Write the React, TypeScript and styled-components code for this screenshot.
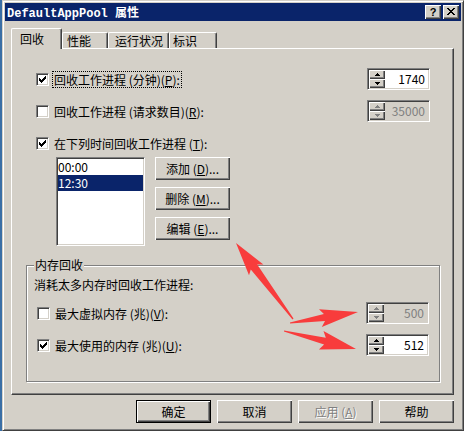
import React from 'react';
import styled, { createGlobalStyle, css } from 'styled-components';

const FACE = '#D4D0C8';
const SHADOW = '#808080';
const DARK = '#404040';
const NAVY = '#0A246A';

const Global = createGlobalStyle`
  html, body { margin: 0; padding: 0; background: #3A6EA5; }
  body {
    font-family: "Noto Sans CJK SC", "Liberation Sans", sans-serif;
    font-size: 12px;
    color: #000;
  }
  * { box-sizing: border-box; }
`;

const raised = css`
  background: ${FACE};
  box-shadow: inset 1px 1px 0 #fff, inset -1px -1px 0 ${DARK}, inset -2px -2px 0 ${SHADOW};
`;

const sunken = css`
  border: 1px solid;
  border-color: ${SHADOW} #fff #fff ${SHADOW};
  box-shadow: inset 1px 1px 0 ${DARK}, inset -1px -1px 0 ${FACE};
`;

const Screen = styled.div`
  position: relative;
  width: 464px;
  height: 431px;
  padding-left: 2px;
  background: #3A6EA5;
  overflow: hidden;
`;

const Window = styled.div`
  width: 462px;
  height: 431px;
  display: flex;
  flex-direction: column;
  background: ${FACE};
  border: 1px solid;
  border-color: ${FACE} ${DARK} ${DARK} ${FACE};
  box-shadow: inset 1px 1px 0 #fff, inset -1px -1px 0 ${SHADOW};
  padding: 2px;
`;

const TitleBar = styled.div`
  height: 18px;
  flex: none;
  display: flex;
  align-items: center;
  padding: 0 2px 0 2px;
  background: ${NAVY};
  color: #fff;
`;

const TitleText = styled.div`
  flex: 1;
  font: bold 12px "Liberation Mono", monospace;
  white-space: pre;
  line-height: 14px;
  padding-top: 1px;
`;

const TitleCjk = styled.span`
  font-family: "Noto Sans CJK SC", sans-serif;
  font-weight: bold;
`;

const CaptionButtons = styled.div`
  display: flex;
  gap: 2px;
`;

const CaptionButton = styled.div`
  ${raised};
  width: 16px;
  height: 14px;
  display: flex;
  align-items: center;
  justify-content: center;
  color: #000;
  font: bold 11px "Liberation Sans", sans-serif;
  line-height: 12px;
  padding-bottom: 1px;
`;

const Client = styled.div`
  flex: 1;
  display: flex;
  flex-direction: column;
  padding: 7px 7px 5px 6px;
`;

const TabStrip = styled.div`
  height: 20px;
  flex: none;
  display: flex;
  align-items: flex-end;
  position: relative;
  z-index: 1;
`;

const Tab = styled.div<{ $active?: boolean; $w: number; $pl: number }>`
  width: ${p => p.$w}px;
  height: ${p => (p.$active ? 21 : 16)}px;
  margin-bottom: ${p => (p.$active ? -1 : 0)}px;
  padding-left: ${p => p.$pl}px;
  display: flex;
  align-items: center;
  background: ${FACE};
  border-top: 1px solid #fff;
  border-left: 1px solid #fff;
  border-right: 1px solid ${DARK};
  box-shadow: inset -1px 0 0 ${SHADOW};
  border-radius: 2px 2px 0 0;
  line-height: 14px;
  white-space: nowrap;
`;

const Panel = styled.div`
  height: 347px;
  flex: none;
  display: flex;
  flex-direction: column;
  border: 1px solid;
  border-color: #fff ${DARK} ${DARK} #fff;
  box-shadow: inset -1px -1px 0 ${SHADOW};
  padding: 19px 13px 0 14px;
`;

const Row = styled.div<{ $mt?: number }>`
  height: 22px;
  flex: none;
  display: flex;
  align-items: center;
  justify-content: space-between;
  padding: 0 10px;
  margin-top: ${p => p.$mt ?? 0}px;
`;

const CheckLabel = styled.label`
  display: flex;
  align-items: center;
  line-height: 14px;
  white-space: nowrap;
`;

const CheckBoxBox = styled.span`
  ${sunken};
  width: 13px;
  height: 13px;
  flex: none;
  background: #fff;
  display: flex;
  align-items: center;
  justify-content: center;
  margin-right: 5px;
`;

const LabelText = styled.span<{ $focus?: boolean }>`
  padding: 1px 1px 0;
  margin-left: -1px;
  outline: ${p => (p.$focus ? '1px dotted #000' : 'none')};
  outline-offset: 0;
`;

const Spinner = styled.div<{ $disabled?: boolean }>`
  ${sunken};
  width: 63px;
  height: 22px;
  display: flex;
  padding: 1px;
  background: ${p => (p.$disabled ? FACE : '#fff')};
`;

const SpinButtons = styled.div`
  width: 16px;
  display: flex;
  flex-direction: column;
`;

const SpinButton = styled.div`
  ${raised};
  flex: 1;
  display: flex;
  align-items: center;
  justify-content: center;
`;

const SpinValue = styled.div<{ $disabled?: boolean }>`
  flex: 1;
  text-align: right;
  padding-right: 3px;
  line-height: 18px;
  color: ${p => (p.$disabled ? SHADOW : '#000')};
`;

const ListArea = styled.div`
  display: flex;
  gap: 10px;
  margin-top: 3px;
  padding-left: 30px;
`;

const ListBox = styled.div`
  ${sunken};
  width: 89px;
  height: 89px;
  padding: 1px;
  background: #fff;
`;

const ListItem = styled.div<{ $selected?: boolean }>`
  height: 16px;
  line-height: 16px;
  background: ${p => (p.$selected ? NAVY : 'transparent')};
  color: ${p => (p.$selected ? '#fff' : '#000')};
`;

const ButtonColumn = styled.div`
  display: flex;
  flex-direction: column;
  gap: 7px;
`;

const PushButton = styled.div<{ $default?: boolean; $disabled?: boolean }>`
  ${raised};
  width: 75px;
  height: 23px;
  display: flex;
  align-items: center;
  justify-content: center;
  line-height: 14px;
  white-space: nowrap;
  color: ${p => (p.$disabled ? SHADOW : '#000')};
  text-shadow: ${p => (p.$disabled ? '1px 1px 0 #fff' : 'none')};
  ${p =>
    p.$default &&
    css`
      border: 1px solid #000;
    `}
`;

const Group = styled.div`
  position: relative;
  height: 117px;
  margin-top: 19px;
  border: 1px solid ${SHADOW};
  box-shadow: inset 1px 1px 0 #fff, 1px 1px 0 #fff;
  display: flex;
  flex-direction: column;
`;

const GroupLabel = styled.div`
  position: absolute;
  top: -8px;
  left: 7px;
  padding: 0 1px;
  background: ${FACE};
  line-height: 14px;
`;

const GroupDesc = styled.div`
  margin-top: 11px;
  padding-left: 7px;
  line-height: 16px;
`;

const ButtonBar = styled.div`
  margin-top: 5px;
  display: flex;
  justify-content: flex-end;
  gap: 6px;
`;

const Overlay = styled.svg`
  position: absolute;
  left: 0;
  top: 0;
  pointer-events: none;
`;

const CheckMark = () => (
  <svg width="7" height="7" viewBox="0 0 7 7" shapeRendering="crispEdges">
    <path
      fill="#000"
      d="M6 0h1v1h-1zM5 1h2v1h-2zM0 2h1v1H0zM4 2h3v1h-3zM0 3h2v1H0zM3 3h3v1h-3zM0 4h5v1H0zM1 5h3v1H1zM2 6h1v1H2z"
    />
  </svg>
);

const CheckBox = ({ checked }: { checked?: boolean }) => (
  <CheckBoxBox>{checked && <CheckMark />}</CheckBoxBox>
);

const Arrow = ({ up, disabled }: { up?: boolean; disabled?: boolean }) => (
  <svg width="5" height="3" viewBox="0 0 5 3" shapeRendering="crispEdges">
    <path
      fill={disabled ? SHADOW : '#000'}
      d={up ? 'M2 0h1v1h1v1h1v1H0V2h1V1h1z' : 'M0 0h5v1H4v1H3v1H2V2H1V1H0z'}
    />
  </svg>
);

const Spin = ({ value, disabled }: { value: string; disabled?: boolean }) => (
  <Spinner $disabled={disabled}>
    <SpinButtons>
      <SpinButton>
        <Arrow up disabled={disabled} />
      </SpinButton>
      <SpinButton>
        <Arrow disabled={disabled} />
      </SpinButton>
    </SpinButtons>
    <SpinValue $disabled={disabled}>{value}</SpinValue>
  </Spinner>
);

const CloseGlyph = () => (
  <svg width="8" height="7" viewBox="0 0 8 7" shapeRendering="crispEdges">
    <path
      fill="#000"
      d="M0 0h2v1H0zM6 0h2v1H6zM1 1h2v1H1zM5 1h2v1H5zM2 2h4v1H2zM3 3h2v1H3zM2 4h4v1H2zM1 5h2v1H1zM5 5h2v1H5zM0 6h2v1H0zM6 6h2v1H6z"
    />
  </svg>
);

function arrowPoints(
  x1: number, y1: number, x2: number, y2: number,
  L: number, H: number, S: number, t: number
) {
  const dx = x2 - x1;
  const dy = y2 - y1;
  const len = Math.hypot(dx, dy);
  const ux = dx / len, uy = dy / len;
  const nx = -uy, ny = ux;
  const bx = x2 - ux * L, by = y2 - uy * L;
  const wx = x2 - ux * L * 1.12, wy = y2 - uy * L * 1.12;
  const pts = [
    [x1 + nx * t, y1 + ny * t],
    [bx + nx * S, by + ny * S],
    [wx + nx * H, wy + ny * H],
    [x2, y2],
    [wx - nx * H, wy - ny * H],
    [bx - nx * S, by - ny * S],
    [x1 - nx * t, y1 - ny * t],
  ];
  return pts.map(p => p.map(v => v.toFixed(1)).join(',')).join(' ');
}

const RedArrows = () => (
  <Overlay width="464" height="431" viewBox="0 0 464 431">
    <g fill="#F83C3C">
      <polygon points={arrowPoints(293, 319, 236, 243, 30, 9, 4, 0.6)} />
      <polygon points={arrowPoints(290, 323, 358, 312, 34, 9, 3.5, 0.6)} />
      <polygon points={arrowPoints(284, 331, 356, 349, 32, 9.5, 3.5, 0.6)} />
    </g>
  </Overlay>
);

export default function App() {
  return (
    <>
      <Global />
      <Screen>
        <Window>
          <TitleBar>
            <TitleText>
              DefaultAppPool <TitleCjk>属性</TitleCjk>
            </TitleText>
            <CaptionButtons>
              <CaptionButton>?</CaptionButton>
              <CaptionButton>
                <CloseGlyph />
              </CaptionButton>
            </CaptionButtons>
          </TitleBar>
          <Client>
            <TabStrip>
              <Tab $active $w={51} $pl={8}>回收</Tab>
              <Tab $w={46} $pl={4}>性能</Tab>
              <Tab $w={61} $pl={6}>运行状况</Tab>
              <Tab $w={48} $pl={3}>标识</Tab>
            </TabStrip>
            <Panel>
              <Row>
                <CheckLabel>
                  <CheckBox checked />
                  <LabelText $focus>
                    回收工作进程 (分钟)(<u>P</u>):
                  </LabelText>
                </CheckLabel>
                <Spin value="1740" />
              </Row>
              <Row $mt={10}>
                <CheckLabel>
                  <CheckBox />
                  <LabelText>
                    回收工作进程 (请求数目)(<u>R</u>):
                  </LabelText>
                </CheckLabel>
                <Spin value="35000" disabled />
              </Row>
              <Row $mt={10}>
                <CheckLabel>
                  <CheckBox checked />
                  <LabelText>
                    在下列时间回收工作进程 (<u>T</u>):
                  </LabelText>
                </CheckLabel>
              </Row>
              <ListArea>
                <ListBox>
                  <ListItem>00:00</ListItem>
                  <ListItem $selected>12:30</ListItem>
                </ListBox>
                <ButtonColumn>
                  <PushButton>
                    添加 (<u>D</u>)...
                  </PushButton>
                  <PushButton>
                    删除 (<u>M</u>)...
                  </PushButton>
                  <PushButton>
                    编辑 (<u>E</u>)...
                  </PushButton>
                </ButtonColumn>
              </ListArea>
              <Group>
                <GroupLabel>内存回收</GroupLabel>
                <GroupDesc>消耗太多内存时回收工作进程:</GroupDesc>
                <Row $mt={9}>
                  <CheckLabel>
                    <CheckBox />
                    <LabelText>
                      最大虚拟内存 (兆)(<u>V</u>):
                    </LabelText>
                  </CheckLabel>
                  <Spin value="500" disabled />
                </Row>
                <Row $mt={10}>
                  <CheckLabel>
                    <CheckBox checked />
                    <LabelText>
                      最大使用的内存 (兆)(<u>U</u>):
                    </LabelText>
                  </CheckLabel>
                  <Spin value="512" />
                </Row>
              </Group>
            </Panel>
            <ButtonBar>
              <PushButton $default>确定</PushButton>
              <PushButton>取消</PushButton>
              <PushButton $disabled>
                应用 (<u>A</u>)
              </PushButton>
              <PushButton>帮助</PushButton>
            </ButtonBar>
          </Client>
        </Window>
        <RedArrows />
      </Screen>
    </>
  );
}
